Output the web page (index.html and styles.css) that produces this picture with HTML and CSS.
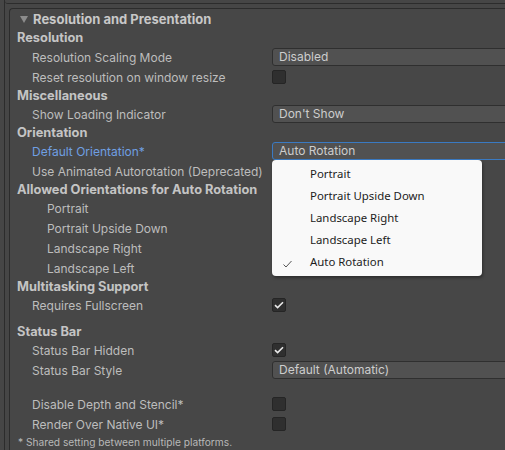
FILE: index.html
```html
<!DOCTYPE html>
<html lang="en">
<head>
    <meta charset="UTF-8">
    <title>Player Settings - Resolution and Presentation</title>
    <link rel="stylesheet" href="styles.css">
</head>
<body>
    <div class="frame">
        <div class="prev-panel"></div>
        <div class="panel">
            <div class="foldout">
                <span class="arrow"></span>
                <span class="foldout-title">Resolution and Presentation</span>
            </div>

            <div class="header">Resolution</div>
            <div class="row">
                <div class="label">Resolution Scaling Mode</div>
                <div class="field"><div class="dropdown">Disabled</div></div>
            </div>
            <div class="row">
                <div class="label">Reset resolution on window resize</div>
                <div class="field"><div class="checkbox"></div></div>
            </div>

            <div class="header">Miscellaneous</div>
            <div class="row">
                <div class="label">Show Loading Indicator</div>
                <div class="field"><div class="dropdown">Don't Show</div></div>
            </div>

            <div class="header">Orientation</div>
            <div class="row">
                <div class="label label-override">Default Orientation*</div>
                <div class="field">
                    <div class="dropdown focused">Auto Rotation</div>
                    <div class="menu">
                        <div class="menu-item">Portrait</div>
                        <div class="menu-item">Portrait Upside Down</div>
                        <div class="menu-item">Landscape Right</div>
                        <div class="menu-item">Landscape Left</div>
                        <div class="menu-item selected">
                            <svg class="menu-check" width="9" height="8" viewBox="0 0 9 8"><path d="M0.5 4.5 L3 7 L8.5 1" fill="none" stroke="#555" stroke-width="1"/></svg>
                            Auto Rotation
                        </div>
                    </div>
                </div>
            </div>
            <div class="row">
                <div class="label">Use Animated Autorotation (Deprecated)</div>
                <div class="field"></div>
            </div>

            <div class="header">Allowed Orientations for Auto Rotation</div>
            <div class="row">
                <div class="label sub">Portrait</div>
                <div class="field"></div>
            </div>
            <div class="row">
                <div class="label sub">Portrait Upside Down</div>
                <div class="field"></div>
            </div>
            <div class="row">
                <div class="label sub">Landscape Right</div>
                <div class="field"></div>
            </div>
            <div class="row">
                <div class="label sub">Landscape Left</div>
                <div class="field"></div>
            </div>

            <div class="header">Multitasking Support</div>
            <div class="row">
                <div class="label">Requires Fullscreen</div>
                <div class="field"><div class="checkbox checked"><svg width="10" height="8" viewBox="0 0 10 8"><path d="M1 4.2 L3.6 6.6 L9 1.2" fill="none" stroke="#e8e8e8" stroke-width="1.6"/></svg></div></div>
            </div>

            <div class="spacer-small"></div>

            <div class="header">Status Bar</div>
            <div class="row">
                <div class="label">Status Bar Hidden</div>
                <div class="field"><div class="checkbox checked"><svg width="10" height="8" viewBox="0 0 10 8"><path d="M1 4.2 L3.6 6.6 L9 1.2" fill="none" stroke="#e8e8e8" stroke-width="1.6"/></svg></div></div>
            </div>
            <div class="row">
                <div class="label">Status Bar Style</div>
                <div class="field"><div class="dropdown">Default (Automatic)</div></div>
            </div>

            <div class="spacer-large"></div>

            <div class="row">
                <div class="label">Disable Depth and Stencil*</div>
                <div class="field"><div class="checkbox"></div></div>
            </div>
            <div class="row">
                <div class="label">Render Over Native UI*</div>
                <div class="field"><div class="checkbox"></div></div>
            </div>

            <div class="footnote">* Shared setting between multiple platforms.</div>
        </div>
    </div>
</body>
</html>
```

FILE: styles.css
```css
body {
    margin: 0;
    background-color: #464646;
    font-family: Inter, "Noto Sans", sans-serif;
    font-size: 12px;
    color: #bdbdbd;
    overflow: hidden;
}
.frame {
    margin-left: 4px;
    border-left: 1px solid #2c2c2c;
    height: 100vh;
    width: 560px;
}
.prev-panel {
    height: 3px;
    border-bottom: 1px solid #2c2c2c;
    border-bottom-left-radius: 3px;
}
.panel {
    margin: 4px 0 0 4px;
    border: 1px solid #2c2c2c;
    border-right: none;
    border-radius: 4px 0 0 4px;
    background-color: #474747;
    height: 460px;
}
.foldout {
    height: 19px;
    display: flex;
    align-items: center;
    padding-left: 10px;
    font-weight: 700;
    font-size: 13px;
    color: #c8c8c8;
}
.arrow {
    width: 0;
    height: 0;
    border-left: 4px solid transparent;
    border-right: 4px solid transparent;
    border-top: 7px solid #8c8c8c;
    margin-right: 5px;
    margin-top: 1px;
}
.header {
    height: 17px;
    padding: 3px 0 0 7px;
    box-sizing: border-box;
    line-height: 14px;
    font-weight: 700;
    font-size: 12.8px;
    color: #c4c4c4;
    white-space: nowrap;
}
.foldout + .header {
    height: 18px;
}
.row {
    display: flex;
    height: 18px;
    margin-top: 2px;
    align-items: center;
}
.label {
    flex: 0 0 240px;
    padding-left: 22px;
    white-space: nowrap;
}
.label.sub {
    padding-left: 37px;
}
.label-override {
    color: #6f9fe2;
}
.field {
    flex: 1;
    position: relative;
    height: 18px;
    display: flex;
    align-items: center;
}
.dropdown {
    box-sizing: border-box;
    width: 100%;
    height: 18px;
    line-height: 16px;
    padding-left: 6px;
    background-color: #515151;
    border: 1px solid #2f2f2f;
    border-radius: 3px;
    color: #cdcdcd;
}
.dropdown.focused {
    border-color: #3a7ac2;
}
.checkbox {
    box-sizing: border-box;
    width: 14px;
    height: 14px;
    background-color: #2f2f2f;
    border: 1px solid #252525;
    border-radius: 2px;
    display: flex;
    align-items: center;
    justify-content: center;
}
.menu {
    position: absolute;
    top: 18px;
    left: 0;
    width: 210px;
    padding: 3px 0 3px;
    background-color: #f9f9f9;
    border-radius: 4px;
    box-shadow: 1px 2px 3px rgba(0, 0, 0, 0.35);
    z-index: 10;
}
.menu-item {
    position: relative;
    height: 22px;
    line-height: 22px;
    padding-left: 38px;
    font-family: "Noto Sans", sans-serif;
    font-size: 11.4px;
    color: #1c1c1c;
}
.menu-check {
    position: absolute;
    left: 11px;
    top: 9px;
}
.spacer-small {
    height: 8px;
}
.spacer-large {
    height: 14px;
}
.footnote {
    padding: 2px 0 0 8px;
    font-size: 10.2px;
    color: #b8b8b8;
    line-height: 14px;
}
```
